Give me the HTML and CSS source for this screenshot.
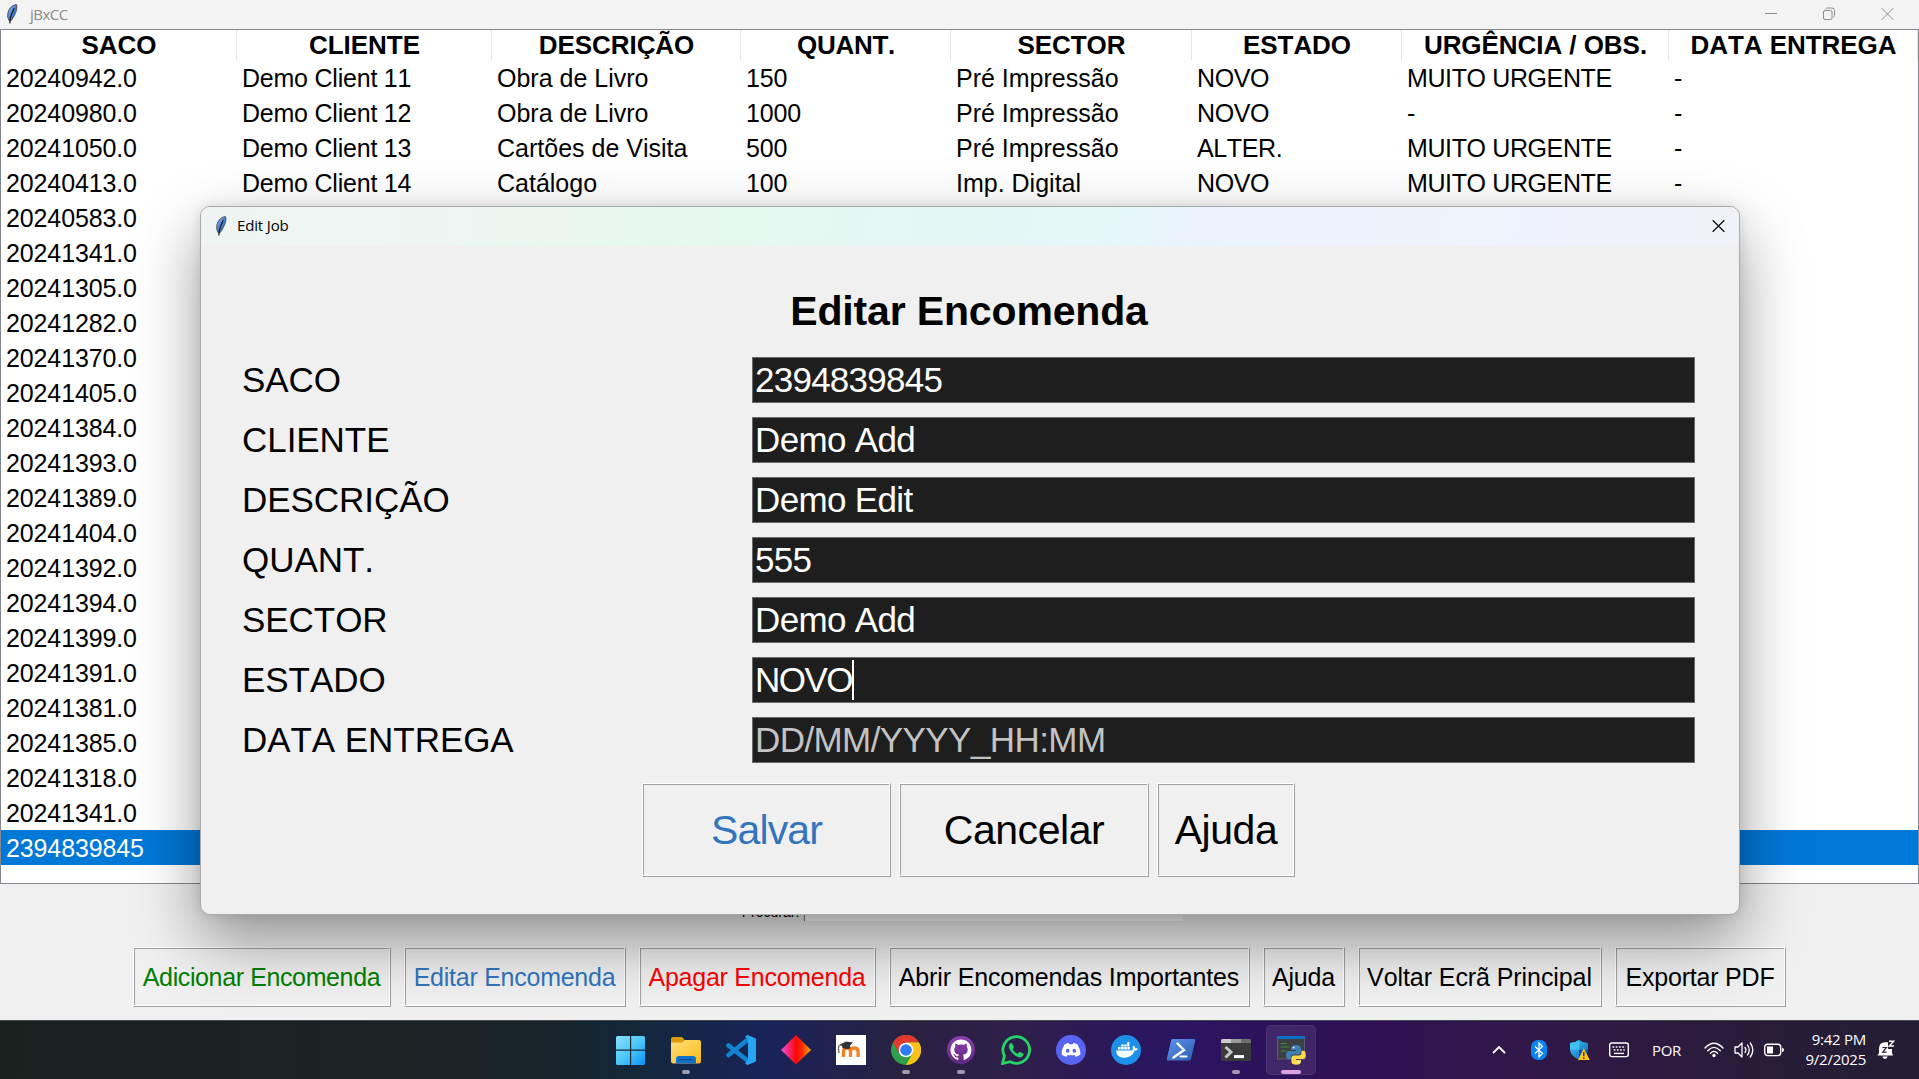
FILE: index.html
```html
<!DOCTYPE html>
<html lang="pt">
<head>
<meta charset="utf-8">
<title>jBxCC</title>
<link rel="stylesheet" href="styles.css">
</head>
<body>
<svg class="defs" width="0" height="0">
  <defs>
    <linearGradient id="quill" x1="0" y1="0" x2="1" y2="1"><stop offset="0" stop-color="#8fbdf0"/><stop offset=".5" stop-color="#4a86d6"/><stop offset="1" stop-color="#24508f"/></linearGradient>
    <linearGradient id="win" x1="0" y1="0" x2="1" y2="1"><stop offset="0" stop-color="#8be0fb"/><stop offset=".5" stop-color="#4cc8f8"/><stop offset="1" stop-color="#0a92f5"/></linearGradient>
    <linearGradient id="folder" x1="0" y1="0" x2="1" y2="1"><stop offset="0" stop-color="#ffe07a"/><stop offset="1" stop-color="#f9ba16"/></linearGradient>
    <linearGradient id="gem" x1="0" x2="1"><stop offset="0" stop-color="#f050e8"/><stop offset=".5" stop-color="#fb0505"/><stop offset=".7" stop-color="#fb2a05"/><stop offset="1" stop-color="#ffb000"/></linearGradient>
    <linearGradient id="gh" x1="0" y1="0" x2="0" y2="1"><stop offset="0" stop-color="#8f3fb0"/><stop offset="1" stop-color="#5f2a86"/></linearGradient>
    <linearGradient id="ps" x1="0" y1="0" x2="1" y2="1"><stop offset="0" stop-color="#5a93ea"/><stop offset="1" stop-color="#2f5fb5"/></linearGradient>
    <linearGradient id="shieldg" x1="0" y1="0" x2="1" y2="1"><stop offset="0" stop-color="#43c8f5"/><stop offset="1" stop-color="#0a62b8"/></linearGradient>
    <symbol id="feather" viewBox="0 0 12 22">
      <path d="M3.600 18C1.200 15.500 1.200 11 2.900 7 4.600 3.500 8 1.500 10.600 1.700c.8 2.800-.2 7-2.400 11-1.200 2.300-2.300 4.200-3.300 5z" fill="url(#quill)" stroke="#4a4f58" stroke-width="1"/>
      <path d="M3.800 20.500 4.200 16 5.200 12 8.300 5" fill="none" stroke="#15181f" stroke-width="1.200"/>
    </symbol>
  </defs>
</svg>

<div class="desktop">
  <main class="window">
    <header class="titlebar">
      <svg class="titlebar-icon" width="12" height="22"><use href="#feather"/></svg>
      <span class="titlebar-name">jBxCC</span>
      <div class="controls">
        <svg width="12" height="14" viewBox="0 0 12 14"><path d="M0 6.500h12" stroke="#8c8c8c"/></svg>
        <svg width="12" height="14" viewBox="0 0 12 14" fill="none" stroke="#8c8c8c"><rect x=".5" y="3.500" width="8.500" height="9" rx="1.500"/><path d="M2.500 1.800Q3 1 4.500 1h4.500q2.500 0 2.500 2.500v5q0 1.300-1 1.700"/></svg>
        <svg width="13" height="14" viewBox="0 0 13 14"><path d="m.7 1.200 11.600 11.600M12.300 1.200.7 12.800" stroke="#8c8c8c"/></svg>
      </div>
    </header>

    <div class="tree">
      <table class="jobs">
        <colgroup><col class="c1"><col class="c2"><col class="c3"><col class="c4"><col class="c5"><col class="c6"><col class="c7"><col class="c8"></colgroup>
        <thead><tr><th>SACO</th><th>CLIENTE</th><th>DESCRIÇÃO</th><th class="tight">QUANT.</th><th>SECTOR</th><th>ESTADO</th><th>URGÊNCIA / OBS.</th><th>DATA ENTREGA</th></tr></thead>
        <tbody>
          <tr><td>20240942.0</td><td>Demo Client 11</td><td>Obra de Livro</td><td>150</td><td>Pré Impressão</td><td>NOVO</td><td>MUITO URGENTE</td><td>-</td></tr>
          <tr><td>20240980.0</td><td>Demo Client 12</td><td>Obra de Livro</td><td>1000</td><td>Pré Impressão</td><td>NOVO</td><td>-</td><td>-</td></tr>
          <tr><td>20241050.0</td><td>Demo Client 13</td><td>Cartões de Visita</td><td>500</td><td>Pré Impressão</td><td>ALTER.</td><td>MUITO URGENTE</td><td>-</td></tr>
          <tr><td>20240413.0</td><td>Demo Client 14</td><td>Catálogo</td><td>100</td><td>Imp. Digital</td><td>NOVO</td><td>MUITO URGENTE</td><td>-</td></tr>
          <tr><td>20240583.0</td></tr>
          <tr><td>20241341.0</td></tr>
          <tr><td>20241305.0</td></tr>
          <tr><td>20241282.0</td></tr>
          <tr><td>20241370.0</td></tr>
          <tr><td>20241405.0</td></tr>
          <tr><td>20241384.0</td></tr>
          <tr><td>20241393.0</td></tr>
          <tr><td>20241389.0</td></tr>
          <tr><td>20241404.0</td></tr>
          <tr><td>20241392.0</td></tr>
          <tr><td>20241394.0</td></tr>
          <tr><td>20241399.0</td></tr>
          <tr><td>20241391.0</td></tr>
          <tr><td>20241381.0</td></tr>
          <tr><td>20241385.0</td></tr>
          <tr><td>20241318.0</td></tr>
          <tr><td>20241341.0</td></tr>
          <tr class="selected"><td>2394839845</td><td colspan="7"></td></tr>
        </tbody>
      </table>
    </div>

    <div class="search"><span class="search-label">Procurar:</span><span class="search-box"></span></div>

    <div class="actions">
      <button class="btn add">Adicionar Encomenda</button>
      <button class="btn edit">Editar Encomenda</button>
      <button class="btn delete">Apagar Encomenda</button>
      <button class="btn important">Abrir Encomendas Importantes</button>
      <button class="btn help">Ajuda</button>
      <button class="btn back">Voltar Ecrã Principal</button>
      <button class="btn export">Exportar PDF</button>
    </div>
  </main>

  <section class="dialog">
    <header class="dialog-bar">
      <svg class="dialog-icon" width="12" height="22"><use href="#feather"/></svg>
      <span class="dialog-name">Edit Job</span>
      <svg class="dialog-close" width="13" height="14" viewBox="0 0 13 14"><path d="m.7 1.200 11.600 11.600M12.300 1.200.7 12.800" stroke="#111" stroke-width="1.300"/></svg>
    </header>
    <h1 class="dialog-title">Editar Encomenda</h1>
    <div class="form">
      <span class="label">SACO</span><span class="entry num">2394839845</span>
      <span class="label">CLIENTE</span><span class="entry">Demo Add</span>
      <span class="label">DESCRIÇÃO</span><span class="entry">Demo Edit</span>
      <span class="label">QUANT.</span><span class="entry num">555</span>
      <span class="label">SECTOR</span><span class="entry">Demo Add</span>
      <span class="label">ESTADO</span><span class="entry caps">NOVO<i class="caret"></i></span>
      <span class="label">DATA ENTREGA</span><span class="entry hint">DD/MM/YYYY_HH:MM</span>
    </div>
    <div class="dialog-actions">
      <button class="btn big save">Salvar</button>
      <button class="btn big cancel">Cancelar</button>
      <button class="btn big ask">Ajuda</button>
    </div>
  </section>

  <footer class="taskbar">
    <nav class="apps">
      <span class="app"><svg width="30" height="30" viewBox="0 0 30 30"><path fill="url(#win)" d="M1.500 1H14v13.500H0V2.500Q0 1 1.500 1zM15.200 1h12.300Q29 1 29 2.500v12H15.200zM0 15.700h14V30H1.500Q0 30 0 28.500zM15.200 15.700H29v12.800q0 1.500-1.500 1.500H15.200z"/></svg></span>
      <span class="app running"><svg width="30" height="30" viewBox="0 0 30 30"><path d="M0 4q0-2 2-2h8q1.500 0 2.500 1.500L14 6v5H0z" fill="#dd9b0b"/><path d="M0 7.500h11L14 5h14q2 0 2 2v19q0 2.500-2.500 2.500h-25Q0 28.500 0 26z" fill="url(#folder)"/><path d="M5 28.500V24q0-3 3-3h14q3 0 3 3v4.500z" fill="#1272c9"/><path d="M8.500 24.700h13" stroke="#0a4a8c" stroke-width="1.200"/></svg></span>
      <span class="app"><svg width="30" height="30" viewBox="0 0 30 30"><path d="M2.500 10.500 22 26M2.500 20 22 4.500" stroke="#1384d0" stroke-width="4.600" stroke-linecap="round"/><path d="M21.500 0 30 3.500v23L21.500 30 19 28.500 22 25V5l-3-3.500z" fill="#27a4f2"/></svg></span>
      <span class="app"><svg width="30" height="30" viewBox="0 0 30 30"><path d="M15 0 30 15 15 29.500 0 15z" fill="url(#gem)"/></svg></span>
      <span class="app"><svg width="30" height="30" viewBox="0 0 30 30"><path fill="#fff" d="M0 0h30v30H0z"/><path d="M7.500 22v-5.500q0-3.500 3.500-3.500t3.500 3.500V22m0-5.500q0-3.500 3.800-3.500t3.800 3.500V22" fill="none" stroke="#f58220" stroke-width="3.300"/><path d="m3 10 7-3.500 7 1-3 3 .5 3q-4 1-8-.5L6 11z" fill="#333"/><path d="M3 10q-1 3 0 8" fill="none" stroke="#333"/></svg></span>
      <span class="app running"><svg width="30" height="30" viewBox="0 0 30 30"><circle cx="15" cy="15" r="15" fill="#2da04b"/><path d="M2 7.500A15 15 0 0 1 28 7.500H15L8.500 19z" fill="#e2382d"/><path d="M28 7.500A15 15 0 0 1 15 30l6.500-11.200L15 7.500z" fill="#fbc318"/><circle cx="15" cy="15" r="7.300" fill="#fff"/><circle cx="15" cy="15" r="5.800" fill="#2f7cf0"/></svg></span>
      <span class="app running"><svg width="30" height="30" viewBox="0 0 30 30"><circle cx="15" cy="15" r="14" fill="url(#gh)"/><path transform="translate(4.500 4.500) scale(1.310)" fill="#fff" d="M8 0C3.580 0 0 3.580 0 8c0 3.540 2.290 6.530 5.470 7.590.4.070.55-.17.55-.38 0-.19-.01-.82-.01-1.490-2.010.37-2.530-.49-2.690-.94-.09-.23-.48-.94-.82-1.130-.28-.15-.68-.52-.01-.53.63-.01 1.080.58 1.230.82.72 1.210 1.870.87 2.330.66.07-.52.28-.87.51-1.070-1.780-.2-3.640-.89-3.640-3.950 0-.87.31-1.590.82-2.150-.08-.2-.36-1.020.08-2.120 0 0 .67-.21 2.200.82.64-.18 1.320-.27 2-.27s1.360.09 2 .27c1.530-1.040 2.200-.82 2.200-.82.44 1.100.16 1.920.08 2.120.51.56.82 1.270.82 2.150 0 3.070-1.870 3.750-3.650 3.950.29.25.54.73.54 1.480 0 1.070-.01 1.930-.01 2.200 0 .21.15.46.55.38A8.010 8.010 0 0 0 16 8c0-4.420-3.580-8-8-8z"/></svg></span>
      <span class="app"><svg width="30" height="30" viewBox="0 0 30 30"><path d="M1.500 28.500 3.400 21A13.300 13.300 0 1 1 9 26.700z" fill="none" stroke="#25d366" stroke-width="2.800"/><path d="M8 10.500q1-3 3-2.300l2 3.800q-.2 1.200-1.400 2.200 1.600 3 5 4.500l1.900-2 4 2q.4 2.500-2.500 3.600-3 .7-7.500-3Q7.500 14.500 8 10.500z" fill="#25d366"/></svg></span>
      <span class="app"><svg width="30" height="30" viewBox="0 0 30 30"><circle cx="15" cy="15" r="15" fill="#5865f2"/><path d="m12.700 8 .6 1.200h3.400l.6-1.200q2.400.4 4.200 1.400 3.200 5 2.900 10-2.300 1.900-5 2.400l-1-1.900q-3.400.8-6.800 0l-1 1.900q-2.700-.5-5-2.400-.3-5 2.900-10 1.800-1 4.200-1.400z" fill="#fff"/><ellipse cx="11.700" cy="15.800" rx="1.800" ry="2" fill="#5865f2"/><ellipse cx="18.300" cy="15.800" rx="1.800" ry="2" fill="#5865f2"/></svg></span>
      <span class="app"><svg width="30" height="30" viewBox="0 0 30 30"><circle cx="15" cy="15" r="15" fill="#1d91ea"/><path d="M5 15.500h16.200q1-1 .5-4l1.200-.7q1.200 1 1.500 2.400 1.700-.2 2.600.5-.8 1.800-3.500 2-2.500 7-10.500 7Q5.500 22.700 5 15.500z" fill="#fff"/><path d="M7 12h2.600v2.600H7zm3.100 0h2.600v2.600h-2.600zm3.100 0h2.600v2.600h-2.600zm3.100 0h2.600v2.600h-2.600zm-6.200-2.600h2.600v2.100h-2.600zm3.100 0h2.600v2.100h-2.600zm3.100-2.400h2v4.500h-2z" fill="#fff"/></svg></span>
      <span class="app"><svg width="30" height="30" viewBox="0 0 30 30"><path d="M6.500 4H28q1.500 0 1.200 1.500L25 24q-.3 1.500-1.800 1.500H2q-1.500 0-1.200-1.500L5 5.500Q5.200 4 6.500 4z" fill="url(#ps)"/><path d="m11.500 8.500 6.500 6.500-10.500 7.500" fill="none" stroke="#fff" stroke-width="2.300" stroke-linecap="round"/><path d="M14.500 21.500h6" stroke="#fff" stroke-width="2" stroke-linecap="round"/></svg></span>
      <span class="app running"><svg width="30" height="30" viewBox="0 0 30 30"><rect y="4" width="30" height="22" rx="1.500" fill="#3b3b3b"/><path d="M0 8V5.500Q0 4 1.500 4H10v4z" fill="#ccc"/><path d="M10 4h10v4H10z" fill="#9b9b9b"/><path d="M20 4h8.500Q30 4 30 5.500V8H20z" fill="#6e6e6e"/><path d="m4.500 12 5.500 5-5.500 5.500" fill="none" stroke="#c8c8c8" stroke-width="3"/><path d="M13 21.600h10" stroke="#fff" stroke-width="3"/></svg></span>
      <span class="app running active"><svg width="30" height="30" viewBox="0 0 30 30"><rect x="1.500" y="1.500" width="27" height="22.500" fill="#3d4043" stroke="#6a6f76" stroke-width=".7"/><path d="M1.500 1h27v3h-27z" fill="#0b70c4"/><path d="M4.500 8.500h6M4.500 12h9M4.500 16h6" stroke="#3c8a3c"/><path d="M19.500 10q-4.500 0-4.500 3.500V15h5v1h-7q-3 0-3 4 0 4.200 3 4.200h2V22q0-2.500 2.800-2.500H22q3 0 3-3v-3Q25 10 19.500 10z" fill="#3f7fb6"/><path d="M20.500 29.800q4.500 0 4.500-3.500V25h-5v-1h7q2.800 0 2.800-4 0-4.200-2.800-4.200h-1.500v2q0 2.700-2.800 2.700H18q-2.600 0-2.600 3v3q0 3.300 5.100 3.300z" fill="#fdd94a"/><circle cx="17.600" cy="12.600" r=".9" fill="#fff"/><circle cx="22.400" cy="27.200" r=".9" fill="#fff"/></svg></span>
    </nav>
    <div class="tray">
      <svg class="chev" width="14" height="10" viewBox="0 0 14 10"><path d="m1 8 6-6 6 6" fill="none" stroke="#fff" stroke-width="1.800"/></svg>
      <svg class="bt" width="16" height="20" viewBox="0 0 16 20"><rect width="16" height="20" rx="7" fill="#0a84f5"/><path d="m4 6.500 7.500 7L8 17V3l3.500 3.500-7.500 7" fill="none" stroke="#fff" stroke-width="1.300"/></svg>
      <svg class="shield" width="20" height="21" viewBox="0 0 20 21"><path d="M9 0q4 3 9 3v6q0 7-9 10.500Q0 16 0 9V3q5 0 9-3z" fill="url(#shieldg)"/><path d="M9 0v9.700H0V3q5 0 9-3z" fill="#3fc2f2"/><path d="M9 9.700h9Q17.500 16 9 19.500z" fill="#0b57a6"/><path d="m13.800 8.300 6 11.700H8z" fill="#fdc41b"/><path d="M13.800 12v4.200m0 1.200v1.500" stroke="#222" stroke-width="1.300"/></svg>
      <svg class="kbd" width="20" height="16" viewBox="0 0 20 16"><rect x=".7" y="1" width="18.600" height="13.600" rx="2" fill="none" stroke="#fff" stroke-width="1.400"/><path d="M3.500 5h13M4.700 8h11" stroke="#fff" stroke-width="1.700" stroke-dasharray="1.700 1.500"/><path d="M5 11.400h10" stroke="#fff" stroke-width="1.400"/></svg>
      <span class="lang">POR</span>
      <svg class="wifi" width="20" height="16" viewBox="0 0 20 16"><g fill="none" stroke="#fff" stroke-width="1.400" stroke-linecap="round"><path d="M1 6q9-9.500 18 0M3.700 8.700q6.300-6.700 12.600 0M6.500 11.300q3.500-3.800 7 0"/></g><circle cx="10" cy="13.500" r="1.700" fill="#fff"/></svg>
      <svg class="vol" width="20" height="18" viewBox="0 0 20 18"><g fill="none" stroke="#fff" stroke-width="1.300" stroke-linecap="round" stroke-linejoin="round"><path d="M1 6h3l4-4v14l-4-4H1z"/><path d="M11 6.500q1.800 2.500 0 5M13.500 4q3.500 5 0 10M16.300 2q5 7 0 14"/></g></svg>
      <svg class="bat" width="20" height="14" viewBox="0 0 20 14"><rect x=".7" y="1.200" width="16" height="11.400" rx="2.800" fill="none" stroke="#fff" stroke-width="1.400"/><path d="M3 3.500h6v7H3z" fill="#fff"/><path d="M18 4.800q2 .2 2 2.100t-2 2.100z" fill="#fff"/></svg>
      <div class="clock"><span>9:42 PM</span><span>9/2/2025</span></div>
      <svg class="bell" width="18" height="20" viewBox="0 0 18 20"><path d="M2 13V8.500Q2.300 2.300 8 2.300h3V9h4v4l1 2.500H.5zM5.300 16.600h5.400Q10 19 8 19t-2.700-2.400z" fill="#fff"/><path d="M5.500 7.500h4L5.700 12.200h4" fill="none" stroke="#2a1b3c" stroke-width="1.200"/><path d="M12 1.200h4.600L12.300 6h4.600" fill="none" stroke="#fff" stroke-width="1.400"/></svg>
    </div>
  </footer>
</div>
</body>
</html>
```
FILE: styles.css
```css
* { box-sizing: border-box; }
body { margin: 0; overflow: hidden; background: #f0f0f0; font-family: "Liberation Sans", Arial, sans-serif; font-kerning: none; color: #000; }
svg { display: block; flex: none; }
.defs { position: absolute; }
.desktop { position: relative; width: 1919px; height: 1079px; display: flex; flex-direction: column; overflow: hidden; }

.window { height: 1020px; display: flex; flex-direction: column; background: #f0f0f0; }
.titlebar { height: 29px; background: #f3f3f3; display: flex; align-items: center; padding: 0 25px 2px 6px; }
.titlebar-name { margin-left: 12px; font: 15px "Open Sans", sans-serif; letter-spacing: -.5px; color: #8a8a8a; }
.controls { margin-left: auto; display: flex; align-items: center; gap: 46px; }

.tree { height: 855px; background: #fff; border: 1px solid #828790; }
.jobs { width: 1917px; table-layout: fixed; border-collapse: separate; border-spacing: 0; font-size: 25px; }
.c1 { width: 236px; } .c2 { width: 255px; } .c3 { width: 249px; } .c4 { width: 210px; }
.c5 { width: 241px; } .c6 { width: 210px; } .c7 { width: 267px; } .c8 { width: 249px; }
.jobs th { height: 30px; padding: 0 0 0 1px; line-height: 30px; font-size: 26px; letter-spacing: -.05px; border-right: 1px solid #e5e5e5; white-space: nowrap; }
.jobs th.tight { letter-spacing: -.3px; }
.jobs td { height: 35px; padding: 1px 0 0 5px; line-height: 34px; white-space: nowrap; letter-spacing: -.12px; }
.jobs td:nth-child(2) { letter-spacing: -.22px; }
.jobs td:nth-child(3), .jobs td:nth-child(5) { letter-spacing: 0; }
.jobs td:nth-child(6), .jobs td:nth-child(7) { letter-spacing: -.38px; }
.selected { background: #0078d7; color: #fff; }

.search { height: 38px; display: flex; align-items: flex-end; justify-content: center; gap: 5px; padding: 0 0 1px 6px; }
.search-label { font-size: 14px; line-height: 16px; height: 17px; }
.search-box { width: 379px; height: 30px; background: #fff; border-left: 1px solid #777; }

.actions { display: flex; justify-content: center; gap: 13px; margin: 25px 1px 0 0; }
.btn { height: 60px; padding: 0; font: 25px "Liberation Sans", Arial, sans-serif; font-kerning: none; letter-spacing: -.2px; white-space: nowrap; color: #000; background: transparent; border: 1px solid; border-color: #fff #a0a0a0 #a0a0a0 #fff; border-radius: 0; box-shadow: inset -1px -1px #fff, inset 1px 1px #a0a0a0; }
.add { width: 258px; color: green; letter-spacing: -.38px; }
.edit { width: 222px; color: #3375bd; letter-spacing: -.25px; }
.delete { width: 237px; color: red; letter-spacing: -.25px; }
.important { width: 361px; letter-spacing: -.15px; }
.help { width: 82px; }
.back { width: 244px; letter-spacing: -.08px; }
.export { width: 171px; }

.dialog { position: absolute; left: 200px; top: 206px; width: 1540px; height: 709px; border: 1px solid #a9a9a9; border-radius: 10px; background: #f0f0f0; box-shadow: 0 26px 64px rgba(0,0,0,.4), 0 0 12px rgba(0,0,0,.1); display: flex; flex-direction: column; align-items: center; }
.dialog-bar { align-self: stretch; height: 39px; display: flex; align-items: center; padding: 0 14px 2px; border-radius: 9px 9px 0 0; background: linear-gradient(100deg, #eff4f3 0, #edf5f2 15%, #e6f8ee 30%, #e3f8f4 46%, #e3f8f7 58%, #eaf3fb 65%, #eef3fa 78%, #eff2fa 88%, #f1f2f8 100%); }
.dialog-name { margin: -2px 0 0 10px; font: 15px "Open Sans", sans-serif; letter-spacing: -.15px; }
.dialog-close { margin-left: auto; }
.dialog-title { margin: 41px 2px 0 0; height: 48px; line-height: 48px; font-size: 41px; letter-spacing: -.15px; }
.form { margin-top: 22px; width: 1456px; display: grid; grid-template-columns: 510px 943px; grid-auto-rows: 46px; row-gap: 14px; font-size: 35px; line-height: 46px; white-space: nowrap; }
.label { letter-spacing: -.05px; }
.entry { display: flex; align-items: center; background: #1e1e1e; border: 1px solid #6a6a6a; color: #fff; padding-left: 2px; letter-spacing: -.65px; line-height: 44px; }
.num { letter-spacing: -.75px; }
.caps { letter-spacing: -1.500px; }
.hint { color: #c3c3c3; letter-spacing: -.58px; }
.caret { width: 2px; height: 40px; background: #fff; }
.dialog-actions { display: flex; gap: 8px; margin: 20px 3px 0 0; }
.big { height: 94px; font-size: 41px; padding-bottom: 0; letter-spacing: -.45px; }
.save { width: 249px; color: #3375bd; letter-spacing: -.9px; }
.cancel { width: 250px; }
.ask { width: 138px; }

.taskbar { position: relative; z-index: 2; height: 59px; display: flex; border-top: 1px solid #46484f; padding-left: 605.500px; background: linear-gradient(90deg, #1c2120 0, #1a2424 20%, #182529 28%, #14273a 33%, #19235a 40%, #292141 47%, #2e1f4a 53%, #2a1562 61%, #2f1056 70%, #311749 79%, #2a1b3d 88%, #241e33 100%); color: #fff; }
.apps { display: flex; gap: 5px; padding-top: 4px; }
.app { position: relative; width: 50px; height: 50px; display: flex; align-items: center; justify-content: center; border-radius: 5px; }
.running::after { content: ""; position: absolute; bottom: 1px; left: 21px; width: 8px; height: 4px; border-radius: 2px; background: #a09aaa; }
.active { background: rgba(255,255,255,.09); box-shadow: inset 0 0 0 1px rgba(255,255,255,.06); }
.active::after { left: 15px; width: 20px; background: #dca0e4; }
.tray { margin-left: auto; display: flex; align-items: center; height: 58px; padding-right: 24px; font-family: "Open Sans", sans-serif; }
.bt { margin-left: 25px; }
.shield { margin-left: 23px; }
.kbd { margin-left: 19px; }
.lang { width: 29px; margin-left: 23px; font-size: 15px; letter-spacing: -.3px; }
.wifi { margin-left: 23px; }
.vol { margin-left: 10px; }
.bat { margin-left: 10px; }
.clock { width: 82px; margin-top: -2px; display: flex; flex-direction: column; align-items: flex-end; line-height: 20px; font-size: 15px; letter-spacing: -.25px; white-space: nowrap; }
.bell { margin-left: 11px; }
```
